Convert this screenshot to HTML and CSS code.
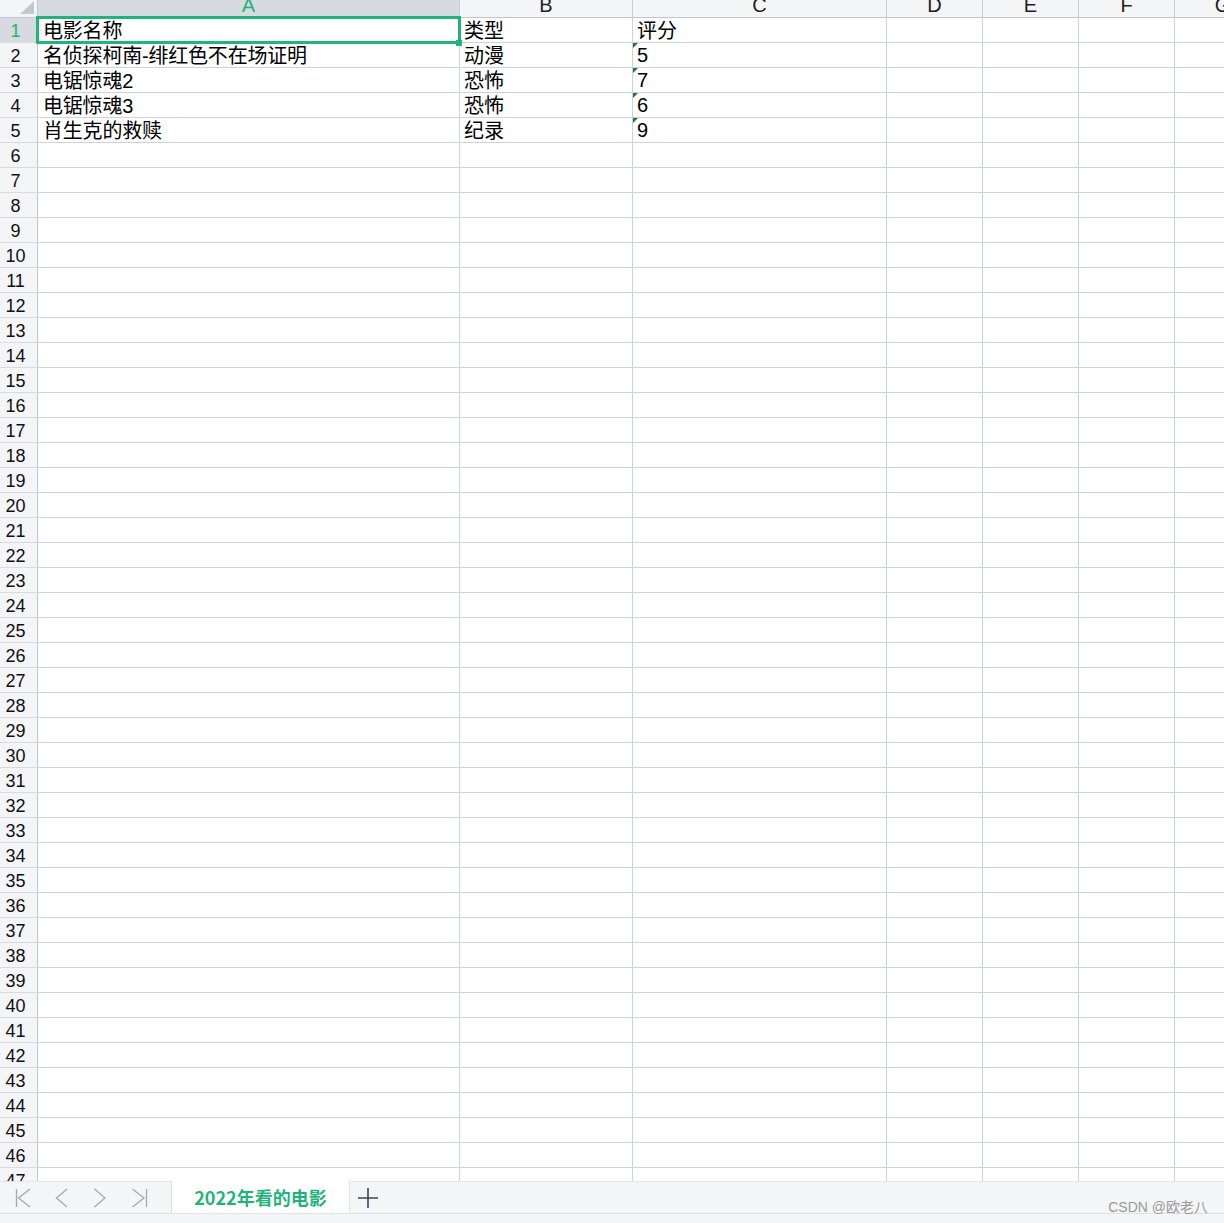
FILE: index.html
```html
<!DOCTYPE html>
<html lang="zh">
<head>
<meta charset="utf-8">
<title>2022年看的电影</title>
<link rel="stylesheet" href="styles.css">
</head>
<body>
<div class="app">
  <div class="sheet">
    <div class="row head">
      <div class="corner"></div>
      <div class="ch sel">A</div><div class="ch">B</div><div class="ch">C</div><div class="ch">D</div><div class="ch">E</div><div class="ch">F</div><div class="ch">G</div>
    </div>
    <div class="row"><div class="rh sel">1</div><div class="c a active">电影名称<span class="selection"><span class="handle"></span></span></div><div class="c">类型</div><div class="c">评分</div><div class="c"></div><div class="c"></div><div class="c"></div><div class="c"></div></div>
    <div class="row"><div class="rh">2</div><div class="c a">名侦探柯南-绯红色不在场证明</div><div class="c">动漫</div><div class="c num">5</div><div class="c"></div><div class="c"></div><div class="c"></div><div class="c"></div></div>
    <div class="row"><div class="rh">3</div><div class="c a">电锯惊魂2</div><div class="c">恐怖</div><div class="c num">7</div><div class="c"></div><div class="c"></div><div class="c"></div><div class="c"></div></div>
    <div class="row"><div class="rh">4</div><div class="c a">电锯惊魂3</div><div class="c">恐怖</div><div class="c num">6</div><div class="c"></div><div class="c"></div><div class="c"></div><div class="c"></div></div>
    <div class="row"><div class="rh">5</div><div class="c a">肖生克的救赎</div><div class="c">纪录</div><div class="c num">9</div><div class="c"></div><div class="c"></div><div class="c"></div><div class="c"></div></div>
    <div class="row"><div class="rh">6</div><div class="c"></div><div class="c"></div><div class="c"></div><div class="c"></div><div class="c"></div><div class="c"></div><div class="c"></div></div>
    <div class="row"><div class="rh">7</div><div class="c"></div><div class="c"></div><div class="c"></div><div class="c"></div><div class="c"></div><div class="c"></div><div class="c"></div></div>
    <div class="row"><div class="rh">8</div><div class="c"></div><div class="c"></div><div class="c"></div><div class="c"></div><div class="c"></div><div class="c"></div><div class="c"></div></div>
    <div class="row"><div class="rh">9</div><div class="c"></div><div class="c"></div><div class="c"></div><div class="c"></div><div class="c"></div><div class="c"></div><div class="c"></div></div>
    <div class="row"><div class="rh">10</div><div class="c"></div><div class="c"></div><div class="c"></div><div class="c"></div><div class="c"></div><div class="c"></div><div class="c"></div></div>
    <div class="row"><div class="rh">11</div><div class="c"></div><div class="c"></div><div class="c"></div><div class="c"></div><div class="c"></div><div class="c"></div><div class="c"></div></div>
    <div class="row"><div class="rh">12</div><div class="c"></div><div class="c"></div><div class="c"></div><div class="c"></div><div class="c"></div><div class="c"></div><div class="c"></div></div>
    <div class="row"><div class="rh">13</div><div class="c"></div><div class="c"></div><div class="c"></div><div class="c"></div><div class="c"></div><div class="c"></div><div class="c"></div></div>
    <div class="row"><div class="rh">14</div><div class="c"></div><div class="c"></div><div class="c"></div><div class="c"></div><div class="c"></div><div class="c"></div><div class="c"></div></div>
    <div class="row"><div class="rh">15</div><div class="c"></div><div class="c"></div><div class="c"></div><div class="c"></div><div class="c"></div><div class="c"></div><div class="c"></div></div>
    <div class="row"><div class="rh">16</div><div class="c"></div><div class="c"></div><div class="c"></div><div class="c"></div><div class="c"></div><div class="c"></div><div class="c"></div></div>
    <div class="row"><div class="rh">17</div><div class="c"></div><div class="c"></div><div class="c"></div><div class="c"></div><div class="c"></div><div class="c"></div><div class="c"></div></div>
    <div class="row"><div class="rh">18</div><div class="c"></div><div class="c"></div><div class="c"></div><div class="c"></div><div class="c"></div><div class="c"></div><div class="c"></div></div>
    <div class="row"><div class="rh">19</div><div class="c"></div><div class="c"></div><div class="c"></div><div class="c"></div><div class="c"></div><div class="c"></div><div class="c"></div></div>
    <div class="row"><div class="rh">20</div><div class="c"></div><div class="c"></div><div class="c"></div><div class="c"></div><div class="c"></div><div class="c"></div><div class="c"></div></div>
    <div class="row"><div class="rh">21</div><div class="c"></div><div class="c"></div><div class="c"></div><div class="c"></div><div class="c"></div><div class="c"></div><div class="c"></div></div>
    <div class="row"><div class="rh">22</div><div class="c"></div><div class="c"></div><div class="c"></div><div class="c"></div><div class="c"></div><div class="c"></div><div class="c"></div></div>
    <div class="row"><div class="rh">23</div><div class="c"></div><div class="c"></div><div class="c"></div><div class="c"></div><div class="c"></div><div class="c"></div><div class="c"></div></div>
    <div class="row"><div class="rh">24</div><div class="c"></div><div class="c"></div><div class="c"></div><div class="c"></div><div class="c"></div><div class="c"></div><div class="c"></div></div>
    <div class="row"><div class="rh">25</div><div class="c"></div><div class="c"></div><div class="c"></div><div class="c"></div><div class="c"></div><div class="c"></div><div class="c"></div></div>
    <div class="row"><div class="rh">26</div><div class="c"></div><div class="c"></div><div class="c"></div><div class="c"></div><div class="c"></div><div class="c"></div><div class="c"></div></div>
    <div class="row"><div class="rh">27</div><div class="c"></div><div class="c"></div><div class="c"></div><div class="c"></div><div class="c"></div><div class="c"></div><div class="c"></div></div>
    <div class="row"><div class="rh">28</div><div class="c"></div><div class="c"></div><div class="c"></div><div class="c"></div><div class="c"></div><div class="c"></div><div class="c"></div></div>
    <div class="row"><div class="rh">29</div><div class="c"></div><div class="c"></div><div class="c"></div><div class="c"></div><div class="c"></div><div class="c"></div><div class="c"></div></div>
    <div class="row"><div class="rh">30</div><div class="c"></div><div class="c"></div><div class="c"></div><div class="c"></div><div class="c"></div><div class="c"></div><div class="c"></div></div>
    <div class="row"><div class="rh">31</div><div class="c"></div><div class="c"></div><div class="c"></div><div class="c"></div><div class="c"></div><div class="c"></div><div class="c"></div></div>
    <div class="row"><div class="rh">32</div><div class="c"></div><div class="c"></div><div class="c"></div><div class="c"></div><div class="c"></div><div class="c"></div><div class="c"></div></div>
    <div class="row"><div class="rh">33</div><div class="c"></div><div class="c"></div><div class="c"></div><div class="c"></div><div class="c"></div><div class="c"></div><div class="c"></div></div>
    <div class="row"><div class="rh">34</div><div class="c"></div><div class="c"></div><div class="c"></div><div class="c"></div><div class="c"></div><div class="c"></div><div class="c"></div></div>
    <div class="row"><div class="rh">35</div><div class="c"></div><div class="c"></div><div class="c"></div><div class="c"></div><div class="c"></div><div class="c"></div><div class="c"></div></div>
    <div class="row"><div class="rh">36</div><div class="c"></div><div class="c"></div><div class="c"></div><div class="c"></div><div class="c"></div><div class="c"></div><div class="c"></div></div>
    <div class="row"><div class="rh">37</div><div class="c"></div><div class="c"></div><div class="c"></div><div class="c"></div><div class="c"></div><div class="c"></div><div class="c"></div></div>
    <div class="row"><div class="rh">38</div><div class="c"></div><div class="c"></div><div class="c"></div><div class="c"></div><div class="c"></div><div class="c"></div><div class="c"></div></div>
    <div class="row"><div class="rh">39</div><div class="c"></div><div class="c"></div><div class="c"></div><div class="c"></div><div class="c"></div><div class="c"></div><div class="c"></div></div>
    <div class="row"><div class="rh">40</div><div class="c"></div><div class="c"></div><div class="c"></div><div class="c"></div><div class="c"></div><div class="c"></div><div class="c"></div></div>
    <div class="row"><div class="rh">41</div><div class="c"></div><div class="c"></div><div class="c"></div><div class="c"></div><div class="c"></div><div class="c"></div><div class="c"></div></div>
    <div class="row"><div class="rh">42</div><div class="c"></div><div class="c"></div><div class="c"></div><div class="c"></div><div class="c"></div><div class="c"></div><div class="c"></div></div>
    <div class="row"><div class="rh">43</div><div class="c"></div><div class="c"></div><div class="c"></div><div class="c"></div><div class="c"></div><div class="c"></div><div class="c"></div></div>
    <div class="row"><div class="rh">44</div><div class="c"></div><div class="c"></div><div class="c"></div><div class="c"></div><div class="c"></div><div class="c"></div><div class="c"></div></div>
    <div class="row"><div class="rh">45</div><div class="c"></div><div class="c"></div><div class="c"></div><div class="c"></div><div class="c"></div><div class="c"></div><div class="c"></div></div>
    <div class="row"><div class="rh">46</div><div class="c"></div><div class="c"></div><div class="c"></div><div class="c"></div><div class="c"></div><div class="c"></div><div class="c"></div></div>
    <div class="row"><div class="rh">47</div><div class="c"></div><div class="c"></div><div class="c"></div><div class="c"></div><div class="c"></div><div class="c"></div><div class="c"></div></div>
  </div>
  <div class="tabbar">
    <div class="nav">
      <svg class="navicon" width="18" height="20" viewBox="0 0 18 20"><path d="M1.5 1V19M15 1L3.5 10L15 19"/></svg>
      <svg class="navicon" width="14" height="20" viewBox="0 0 14 20"><path d="M12 1L1.5 10L12 19"/></svg>
      <svg class="navicon" width="14" height="20" viewBox="0 0 14 20"><path d="M1.5 1L12 10L1.5 19"/></svg>
      <svg class="navicon" width="18" height="20" viewBox="0 0 18 20"><path d="M1.5 1L13 10L1.5 19M15.5 1V19"/></svg>
    </div>
    <div class="tab">2022年看的电影</div>
    <div class="add"><svg width="22" height="22" viewBox="0 0 22 22"><path d="M11 1V21M1 11H21"/></svg></div>
  </div>
  <div class="footer"></div>
  <div class="watermark">CSDN @欧老八</div>
</div>
</body>
</html>
```
FILE: styles.css
```css
* { box-sizing: border-box; }
html, body { margin: 0; padding: 0; }
body {
  background: #fff;
  font-family: "Liberation Sans", "Noto Sans CJK SC", sans-serif;
  color: #000;
  overflow: hidden;
}
.app {
  position: relative;
  width: 1224px;
  height: 1223px;
  display: flex;
  flex-direction: column;
  overflow: hidden;
}
.sheet {
  height: 1181px;
  overflow: hidden;
  flex: none;
}
.row {
  display: grid;
  grid-template-columns: 38px 422px 173px 254px 96px 96px 96px 96px;
  height: 25px;
  width: max-content;
}
.row.head { height: 18px; }

.corner {
  background: #f4f5f7;
  border-right: 1px solid #bfc6d4;
  border-bottom: 1px solid #bfc6d4;
  display: flex;
  justify-content: flex-end;
  align-items: flex-end;
  padding: 0 3px 3px 0;
}
.corner::after {
  content: "";
  width: 0;
  height: 0;
  border-left: 14px solid transparent;
  border-bottom: 13px solid #c5c8ce;
}
.ch {
  background: #f4f5f7;
  border-right: 1px solid #c6ccd9;
  border-bottom: 1px solid #bfc6d4;
  text-align: center;
  font-size: 20px;
  line-height: 11px;
  color: #1e1e1e;
  overflow: hidden;
}
.ch.sel {
  background: #d7dade;
  color: #1fb57a;
}
.rh {
  background: #f4f5f7;
  border-right: 1px solid #bfc6d4;
  border-bottom: 1px solid #d6dae3;
  text-align: center;
  padding: 4px 6px 0 0;
  font-size: 18px;
  line-height: 19px;
  color: #111;
  overflow: hidden;
}
.rh.sel {
  background: #d7dade;
  color: #1fb57a;
}
.c {
  position: relative;
  border-right: 1px solid #cdd2de;
  border-bottom: 1px solid #cdd2de;
  padding: 3px 0 0 4px;
  font-size: 20px;
  line-height: 21px;
  white-space: nowrap;
}
.c.a { padding-left: 5px; letter-spacing: -0.2px; }
.c.num { padding-top: 2px; }
.c.num::before {
  content: "";
  position: absolute;
  left: 0;
  top: 0;
  width: 0;
  height: 0;
  border-top: 5px solid #1b7d2b;
  border-right: 5px solid transparent;
}
.selection {
  position: absolute;
  left: -2px;
  top: -2px;
  width: 425px;
  height: 28px;
  border: 3px solid #1fb57a;
  pointer-events: none;
  z-index: 2;
}
.handle {
  position: absolute;
  right: -4px;
  bottom: -5px;
  width: 6px;
  height: 6px;
  background: #1fb57a;
}

.tabbar {
  height: 32px;
  flex: none;
  background: #f4f5f7;
  border-top: 1px solid #e4e6ea;
  display: flex;
  align-items: stretch;
}
.nav {
  width: 171px;
  display: flex;
  align-items: center;
  padding-left: 15px;
  gap: 0;
}
.navicon {
  fill: none;
  stroke: #a8a8a8;
  stroke-width: 1.3;
}
.navicon:nth-child(1) { margin-right: 22px; }
.navicon:nth-child(2) { margin-right: 24px; }
.navicon:nth-child(3) { margin-right: 24px; }
.tab {
  width: 179px;
  background: #fff;
  border-left: 1px solid #e0e2e6;
  border-right: 1px solid #e0e2e6;
  margin-top: -1px;
  display: flex;
  align-items: center;
  justify-content: center;
  font-family: "Noto Sans CJK SC", sans-serif;
  font-weight: bold;
  font-size: 18px;
  color: #1fb57a;
  padding-bottom: 1px;
}
.add {
  width: 36px;
  display: flex;
  align-items: center;
  justify-content: center;
}
.add svg {
  fill: none;
  stroke: #3d4558;
  stroke-width: 1.6;
}
.footer {
  flex: 1;
  background: #f4f5f7;
  border-top: 1px solid #dfe1e5;
}
.watermark {
  position: absolute;
  right: 16px;
  bottom: 8px;
  font-family: "Liberation Sans", "Noto Sans CJK SC", sans-serif;
  font-size: 14px;
  color: #9a9a9a;
  line-height: 16px;
}
```
